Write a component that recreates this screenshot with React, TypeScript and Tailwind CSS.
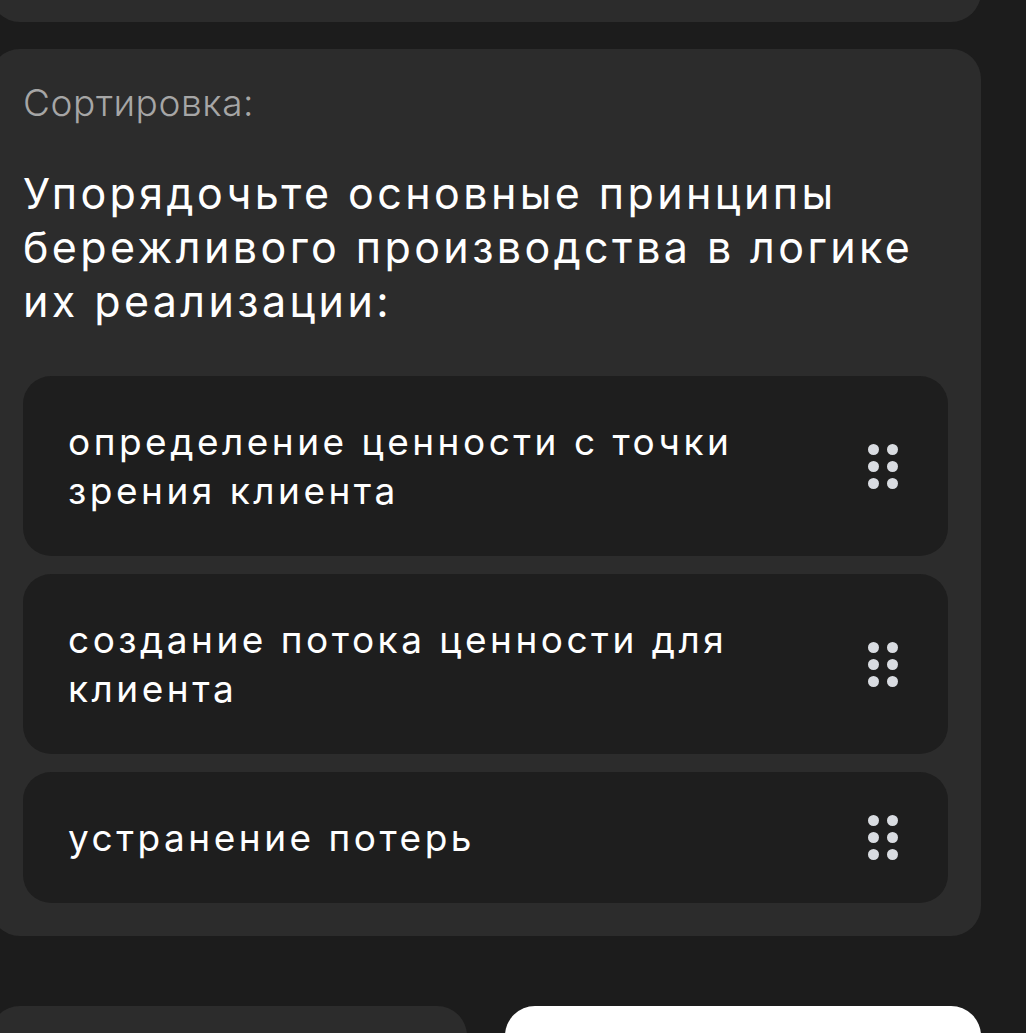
const items = [
  "определение ценности с точки зрения клиента",
  "создание потока ценности для клиента",
  "устранение потерь",
];

function DragHandle() {
  return (
    <div className="grid shrink-0 grid-cols-2 gap-x-[8px] gap-y-[6px]">
      {Array.from({ length: 6 }).map((_, i) => (
        <span key={i} className="block h-[11px] w-[11px] rounded-full bg-[#d9dce1]" />
      ))}
    </div>
  );
}

export default function App() {
  return (
    <div
      className="h-[1033px] w-[1026px] overflow-hidden bg-[#1c1c1c] text-white"
      style={{ fontFamily: "Inter, 'Noto Sans', sans-serif" }}
    >
      <div className="ml-[-10px] w-[991px]">
        {/* previous card, mostly scrolled away */}
        <div className="mt-[-178px] h-[200px] rounded-[30px] bg-[#2c2c2c]" />

        <section className="mt-[27px] rounded-[30px] bg-[#2c2c2c] px-[33px] pb-[33px] pt-[28px]">
          <p className="text-[37px] font-light leading-[52px] tracking-[0.6px] text-[#a6a6a6]">Сортировка:</p>

          <h2 className="mt-[37px] text-[43px] font-normal leading-[54px] tracking-[3.4px] text-white">
            Упорядочьте основные принципы бережливого производства в логике их реализации:
          </h2>

          <ul className="mt-[48px] flex flex-col gap-[18px]">
            {items.map((text) => (
              <li
                key={text}
                className="flex items-center gap-[40px] rounded-[28px] bg-[#1e1e1e] py-[41px] pl-[45px] pr-[50px]"
              >
                <span className="flex-1 text-[37px] leading-[49px] tracking-[3.5px] text-white">{text}</span>
                <DragHandle />
              </li>
            ))}
          </ul>
        </section>

        <div className="mt-[70px] flex gap-[38px]">
          <div className="h-[120px] w-[477px] rounded-[30px] bg-[#2c2c2c]" />
          <div className="h-[120px] flex-1 rounded-[30px] bg-white" />
        </div>
      </div>
    </div>
  );
}
